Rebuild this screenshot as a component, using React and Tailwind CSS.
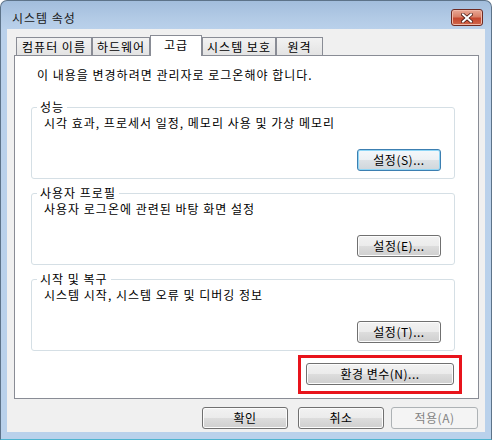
import React from "react";

const FONT = "font-['Noto_Sans_CJK_KR','Noto_Sans',sans-serif]";
const BTN =
  "flex items-center justify-center h-[22px] rounded-[3px] border border-[#707070] bg-[linear-gradient(to_bottom,#f2f2f2_0%,#ebebeb_50%,#dddddd_50%,#cfcfcf_100%)] shadow-[inset_0_0_0_1px_#fcfcfc] text-[12px] leading-[14px] tracking-[0.5px] text-black";
const BTN_FOCUS =
  "flex items-center justify-center h-[22px] rounded-[3px] border border-[#3c7fb1] bg-[linear-gradient(to_bottom,#f4f8fb_0%,#ecf0f3_50%,#dde2e6_50%,#cfd6db_100%)] shadow-[inset_0_0_0_1px_#8fd6f6] text-[12px] leading-[14px] tracking-[0.5px] text-black";
const BTN_DIS =
  "flex items-center justify-center h-[22px] rounded-[3px] border border-[#adb2b5] bg-[#f4f4f4] text-[12px] leading-[14px] tracking-[0.5px] text-[#838383]";

function Group({ label, desc, btn, focus }) {
  return (
    <div className="flex flex-col h-[72px] w-[424px] ml-[16px] rounded-[3px] border border-[#d5dfe5]">
      <span className="-mt-[8px] ml-[5px] px-[3px] bg-white w-fit text-[12px] leading-[14px] tracking-[1px]">
        {label}
      </span>
      <span className="mt-[2px] ml-[12px] text-[12px] leading-[14px] tracking-[1px]">{desc}</span>
      <div className="flex justify-end mt-[19px] mr-[13px]">
        <div className={`${focus ? BTN_FOCUS : BTN} w-[84px]`}>{btn}</div>
      </div>
    </div>
  );
}

function Tab({ children, w, selected }) {
  if (selected) {
    return (
      <div
        className={`${w} h-[21px] -mb-px z-10 flex items-start justify-center pt-[2px] bg-white border border-b-0 border-[#898c95] text-[12px] leading-[14px] tracking-[1px]`}
      >
        {children}
      </div>
    );
  }
  return (
    <div
      className={`${w} h-[18px] flex items-center justify-center bg-[linear-gradient(to_bottom,#f2f2f2,#e3e3e3)] border border-b-0 border-[#898c95] text-[12px] leading-[14px] tracking-[1px]`}
    >
      {children}
    </div>
  );
}

export default function App() {
  return (
    <div
      className={`${FONT} w-[492px] h-[440px] flex flex-col rounded-t-[7px] border border-[#5d7389] border-b-[#4fb4cf] bg-[linear-gradient(to_bottom,#a2bddc_0px,#b3cbe6_18px,#bad1eb_29px,#b9d1eb_100%)] text-black overflow-hidden`}
    >
      {/* title bar */}
      <div className="h-[28px] flex justify-between">
        <span className="ml-[11px] mt-[10px] text-[12px] leading-[14px] tracking-[1px] text-[#1a1a1a]">
          시스템 속성
        </span>
        <div className="mt-[8px] mr-[8px] w-[32px] h-[17px] rounded-[3px] border border-[#6e2a22] bg-[linear-gradient(to_bottom,#e9a895_0%,#d98068_45%,#c5472f_55%,#d0674b_100%)] shadow-[inset_0_0_0_1px_#f0b8a8] flex items-center justify-center">
          <svg width="12" height="10" viewBox="0 0 12 10">
            <path
              d="M2 1.5 L10 8.5 M10 1.5 L2 8.5"
              stroke="#4a1a14"
              strokeWidth="3.6"
              strokeLinecap="square"
            />
            <path
              d="M2 1.5 L10 8.5 M10 1.5 L2 8.5"
              stroke="#ffffff"
              strokeWidth="2"
              strokeLinecap="square"
            />
          </svg>
        </div>
      </div>

      {/* client area */}
      <div className="mx-[6px] h-[403px] bg-[#f0f0f0] flex flex-col pt-[6px] px-[7px]">
        {/* tabs */}
        <div className="h-[20px] flex items-end pl-[2px]">
          <Tab w="w-[76px]">컴퓨터 이름</Tab>
          <Tab w="w-[58px]">하드웨어</Tab>
          <Tab w="w-[52px]" selected>
            고급
          </Tab>
          <Tab w="w-[74px]">시스템 보호</Tab>
          <Tab w="w-[47px]">원격</Tab>
        </div>

        {/* tab page */}
        <div className="w-[465px] h-[344px] bg-white border border-[#898c95] flex flex-col">
          <span className="mt-[12px] ml-[22px] text-[12px] leading-[14px] tracking-[1px]">
            이 내용을 변경하려면 관리자로 로그온해야 합니다.
          </span>
          <div className="mt-[25px] flex flex-col gap-[14px]">
            <Group
              label="성능"
              desc="시각 효과, 프로세서 일정, 메모리 사용 및 가상 메모리"
              btn="설정(S)..."
              focus
            />
            <Group
              label="사용자 프로필"
              desc="사용자 로그온에 관련된 바탕 화면 설정"
              btn="설정(E)..."
            />
            <Group
              label="시작 및 복구"
              desc="시스템 시작, 시스템 오류 및 디버깅 정보"
              btn="설정(T)..."
            />
          </div>
          <div className="flex justify-end mt-[4px] mr-[16px]">
            <div className="w-[164px] h-[39px] border-[3px] border-[#e8141c] flex items-start justify-start pt-[5px] pl-[5px]">
              <div className={`${BTN} w-[148px]`}>환경 변수(N)...</div>
            </div>
          </div>
        </div>

        {/* bottom buttons */}
        <div className="flex justify-end mt-[8px]">
          <div className={`${BTN} w-[86px]`}>확인</div>
          <div className={`${BTN} w-[86px] ml-[10px]`}>취소</div>
          <div className={`${BTN_DIS} w-[87px] ml-[7px]`}>적용(A)</div>
        </div>
      </div>
    </div>
  );
}
